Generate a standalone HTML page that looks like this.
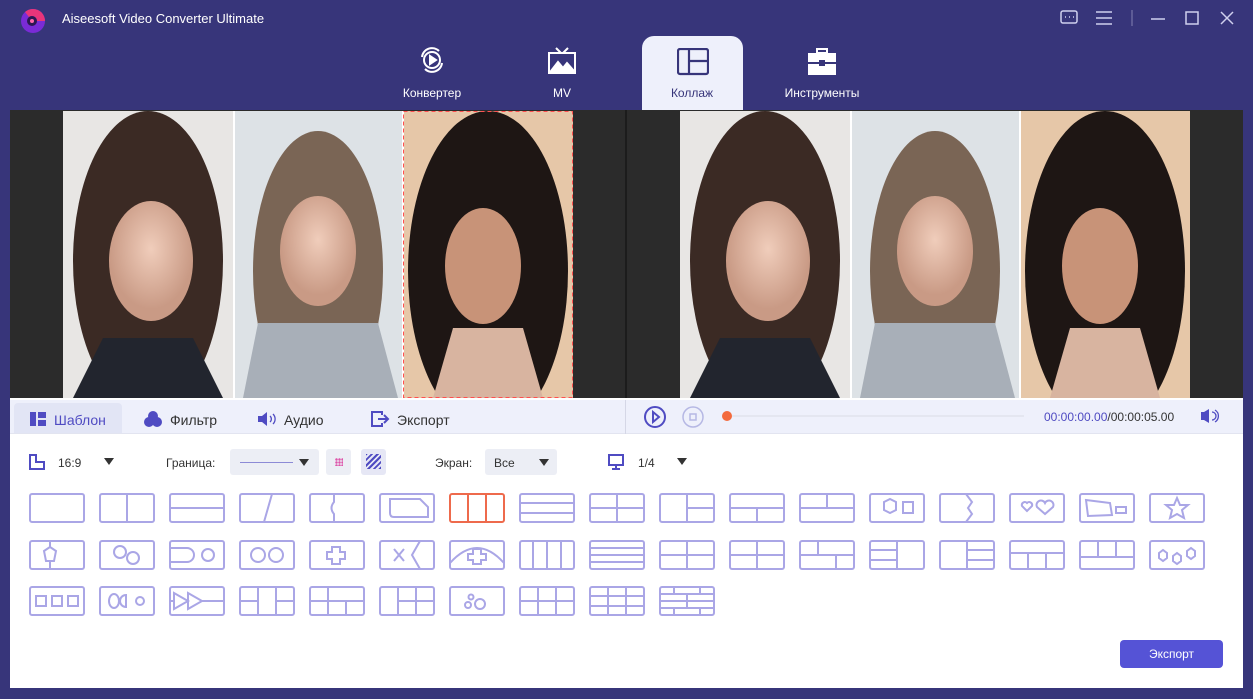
<!DOCTYPE html><html><head><meta charset="utf-8"><style>
*{margin:0;padding:0;box-sizing:border-box}
body{width:1253px;height:699px;background:#37357a;font-family:"Liberation Sans",sans-serif;position:relative;overflow:hidden}
.a{position:absolute}
.title{left:62px;top:11px;color:#fff;font-size:13px}
.tab{color:#fff;font-size:12px;text-align:center;top:86px}
.main{left:10px;top:110px;width:1233px;height:578px;background:#fff}
.prev{left:10px;top:110px;width:1233px;height:288px;background:#2b2b2b}
.bar{left:10px;top:400px;width:1233px;height:34px;background:#eef0fb;border-bottom:1px solid #e2e4f0}
.bt{font-size:14px;color:#333;top:412px}
.sm{font-size:12px;color:#333}
.tile{position:absolute;width:55px;height:30px}
</style></head><body>
<!-- logo -->
<svg class="a" style="left:17px;top:6px" width="32" height="30" viewBox="0 0 32 30"><circle cx="16" cy="15" r="12" fill="#7a2bd6"/><path d="M8 6 A12 12 0 0 1 28 15 L20 15 A5 5 0 0 0 12 11Z" fill="#e8357a"/><circle cx="15" cy="15" r="5" fill="#2b1850"/><circle cx="15" cy="15" r="2" fill="#f6a"/></svg>
<div class="a title">Aiseesoft Video Converter Ultimate</div>
<!-- window controls -->
<svg class="a" style="left:1058px;top:8px" width="180" height="20" fill="none" stroke="#cfd0ee" stroke-width="1.5"><rect x="3" y="3" width="16" height="12" rx="2"/><path d="M7 9h1M11 9h1M15 9h1"/><path d="M38 4h16M38 10h16M38 16h16"/><path d="M74 2v16" stroke="#6a68a0"/><path d="M93 11h14"/><rect x="128" y="4" width="12" height="12"/><path d="M163 4l12 12M175 4l-12 12"/></svg>
<!-- tabs -->
<div class="a" style="left:642px;top:36px;width:101px;height:76px;background:#eef0fb;border-radius:12px 12px 0 0"></div>
<svg class="a" style="left:417px;top:45px" width="30" height="30" fill="none" stroke="#fff" stroke-width="2"><circle cx="15" cy="15" r="8"/><path d="M13 11v8l6-4z" fill="#fff"/><path d="M5 12a10 10 0 0 1 17-6M25 18a10 10 0 0 1-17 6"/></svg>
<svg class="a" style="left:547px;top:46px" width="30" height="30" fill="none" stroke="#fff" stroke-width="2"><path d="M9 2l5 5M21 2l-5 5"/><rect x="2" y="7" width="26" height="20"/><path d="M4 25l7-9 5 6 4-5 7 8z" fill="#fff"/></svg>
<svg class="a" style="left:677px;top:48px" width="32" height="28" fill="none" stroke="#37357a" stroke-width="2.2"><rect x="1" y="1" width="30" height="25" rx="2"/><path d="M12 1v25M12 13h19"/></svg>
<svg class="a" style="left:807px;top:48px" width="30" height="28" fill="#fff"><rect x="10" y="1" width="10" height="4" fill="none" stroke="#fff" stroke-width="2"/><rect x="1" y="5" width="28" height="9"/><rect x="1" y="16" width="28" height="11"/><rect x="12" y="12" width="6" height="6" fill="#37357a"/></svg>
<div class="a tab" style="left:392px;width:80px">Конвертер</div>
<div class="a tab" style="left:542px;width:40px">MV</div>
<div class="a tab" style="left:652px;width:80px;color:#37357a">Коллаж</div>
<div class="a tab" style="left:772px;width:100px">Инструменты</div>
<div class="a main"></div>
<div class="a prev"></div>
<div class="a" style="left:625px;top:110px;width:2px;height:288px;background:#1c1c1c"></div>
<!-- photos -->
<svg class="a" style="left:63px;top:111px" width="510" height="287">
<defs><radialGradient id="f" cx=".5" cy=".4" r=".5"><stop offset="0" stop-color="#f0cdbb"/><stop offset="1" stop-color="#c99a85"/></radialGradient></defs>
<rect width="170" height="287" fill="#e8e6e4"/><rect x="171" width="168" height="287" fill="#dde2e6"/><rect x="340" width="170" height="287" fill="#e6c7a8"/>
<ellipse cx="85" cy="150" rx="75" ry="150" fill="#3b2a24"/><ellipse cx="88" cy="150" rx="42" ry="60" fill="url(#f)"/><path d="M10 287l30-60h90l30 60z" fill="#22252e"/>
<ellipse cx="255" cy="160" rx="65" ry="140" fill="#7a6555"/><ellipse cx="255" cy="140" rx="38" ry="55" fill="url(#f)"/><path d="M180 287l15-75h120l20 75z" fill="#a8afb8"/>
<ellipse cx="425" cy="160" rx="80" ry="160" fill="#1e1614"/><ellipse cx="420" cy="155" rx="38" ry="58" fill="#c89378"/><path d="M370 287l20-70h70l20 70z" fill="#d8b4a0"/>
<rect x="170" width="2" height="287" fill="#fff"/><rect x="339" width="2" height="287" fill="#fff"/>
<rect x="340.5" y=".5" width="169" height="286" fill="none" stroke="#ff5050" stroke-dasharray="4 3"/>
</svg>
<svg class="a" style="left:680px;top:111px" width="510" height="287">
<rect width="170" height="287" fill="#e8e6e4"/><rect x="171" width="168" height="287" fill="#dde2e6"/><rect x="340" width="170" height="287" fill="#e6c7a8"/>
<ellipse cx="85" cy="150" rx="75" ry="150" fill="#3b2a24"/><ellipse cx="88" cy="150" rx="42" ry="60" fill="url(#f)"/><path d="M10 287l30-60h90l30 60z" fill="#22252e"/>
<ellipse cx="255" cy="160" rx="65" ry="140" fill="#7a6555"/><ellipse cx="255" cy="140" rx="38" ry="55" fill="url(#f)"/><path d="M180 287l15-75h120l20 75z" fill="#a8afb8"/>
<ellipse cx="425" cy="160" rx="80" ry="160" fill="#1e1614"/><ellipse cx="420" cy="155" rx="38" ry="58" fill="#c89378"/><path d="M370 287l20-70h70l20 70z" fill="#d8b4a0"/>
<rect x="170" width="2" height="287" fill="#fff"/><rect x="339" width="2" height="287" fill="#fff"/>
</svg>
<!-- bar -->
<div class="a bar"></div>
<div class="a" style="left:14px;top:403px;width:108px;height:30px;background:#e2e5f5;border-radius:4px 4px 0 0"></div>
<div class="a" style="left:625px;top:400px;width:1px;height:34px;background:#d5d7e6"></div>
<svg class="a" style="left:30px;top:411px" width="16" height="16" fill="#4f4bc2"><rect x="0" y="1" width="6" height="14"/><rect x="8" y="1" width="8" height="6"/><rect x="8" y="9" width="8" height="6"/></svg>
<div class="a bt" style="left:54px;color:#4f4bc2">Шаблон</div>
<svg class="a" style="left:143px;top:410px" width="20" height="18" fill="#4f4bc2"><circle cx="10" cy="6" r="5"/><circle cx="6" cy="12" r="5"/><circle cx="14" cy="12" r="5"/></svg>
<div class="a bt" style="left:170px">Фильтр</div>
<svg class="a" style="left:257px;top:411px" width="22" height="16"><path d="M1 5h4l5-4v14l-5-4H1z" fill="#4f4bc2"/><path d="M13 5a4 4 0 0 1 0 6M16 3a7 7 0 0 1 0 10" stroke="#4f4bc2" fill="none" stroke-width="1.3"/></svg>
<div class="a bt" style="left:284px">Аудио</div>
<svg class="a" style="left:370px;top:410px" width="20" height="18" fill="none" stroke="#4f4bc2" stroke-width="2"><path d="M12 5V2H2v14h10v-3"/><path d="M8 9h10M14 5l4 4-4 4" /></svg>
<div class="a bt" style="left:397px">Экспорт</div>
<svg class="a" style="left:643px;top:405px" width="24" height="24" fill="none" stroke="#4f4bc2" stroke-width="2"><circle cx="12" cy="12" r="10"/><path d="M10 7v10l6-5z"/></svg>
<svg class="a" style="left:681px;top:405px" width="24" height="24" fill="none" stroke="#b6b8e4" stroke-width="1.5"><circle cx="12" cy="12" r="10"/><rect x="9" y="9" width="6" height="6"/></svg>
<div class="a" style="left:722px;top:411px;width:10px;height:10px;border-radius:5px;background:#f36a3d"></div>
<div class="a" style="left:732px;top:415px;width:292px;height:2px;background:#e4e6f0"></div>
<div class="a sm" style="left:1044px;top:410px"><span style="color:#4f4bc2">00:00:00.00</span>/00:00:05.00</div>
<svg class="a" style="left:1200px;top:408px" width="20" height="16"><path d="M1 4h3l5-3v14l-5-3H1z" fill="#4f4bc2"/><path d="M12 4a4 4 0 0 1 0 8M15 2a7 7 0 0 1 0 12" stroke="#4f4bc2" fill="none" stroke-width="1.3"/></svg>
<!-- controls -->
<svg class="a" style="left:29px;top:454px" width="16" height="16" fill="none" stroke="#4f4bc2" stroke-width="2"><path d="M1 1v14h14V8H7V1z"/></svg>
<div class="a sm" style="left:58px;top:456px">16:9</div>
<div class="a" style="left:104px;top:458px;border:5px solid transparent;border-top:7px solid #333"></div>
<div class="a sm" style="left:166px;top:456px">Граница:</div>
<div class="a" style="left:230px;top:449px;width:89px;height:26px;background:#eceef5;border-radius:3px"></div>
<div class="a" style="left:240px;top:462px;width:53px;height:1px;background:#8c8ad6"></div>
<div class="a" style="left:299px;top:459px;border:5px solid transparent;border-top:7px solid #333"></div>
<div class="a" style="left:326px;top:449px;width:25px;height:26px;background:#eceef5;border-radius:3px"></div>
<div class="a" style="left:335px;top:458px;width:8px;height:8px;background:radial-gradient(circle,#d5a 1px,transparent 1.5px) 0 0/3px 3px"></div>
<div class="a" style="left:361px;top:449px;width:25px;height:26px;background:#e6e7f5;border-radius:3px"></div>
<div class="a" style="left:366px;top:454px;width:15px;height:15px;background:repeating-linear-gradient(-45deg,#4f4bc2 0 2px,transparent 2px 4px)"></div>
<div class="a sm" style="left:435px;top:456px">Экран:</div>
<div class="a" style="left:485px;top:449px;width:72px;height:26px;background:#eceef5;border-radius:3px"></div>
<div class="a sm" style="left:494px;top:456px">Все</div>
<div class="a" style="left:539px;top:459px;border:5px solid transparent;border-top:7px solid #333"></div>
<svg class="a" style="left:608px;top:454px" width="16" height="16" fill="none" stroke="#4f4bc2" stroke-width="2"><rect x="1" y="1" width="14" height="10"/><path d="M8 11v4M4 15h8"/></svg>
<div class="a sm" style="left:638px;top:456px">1/4</div>
<div class="a" style="left:677px;top:458px;border:5px solid transparent;border-top:7px solid #333"></div>
<!-- tiles -->
<svg class="a" style="left:0;top:0" width="1253" height="699" fill="none" stroke="#aaa6e6" stroke-width="2">
<g transform="translate(30,494)"><rect width="54" height="28" rx="2"/></g>
<g transform="translate(100,494)"><rect width="54" height="28" rx="2"/><path d="M27 0v28"/></g>
<g transform="translate(170,494)"><rect width="54" height="28" rx="2"/><path d="M0 14h54"/></g>
<g transform="translate(240,494)"><rect width="54" height="28" rx="2"/><path d="M32 0l-8 28"/></g>
<g transform="translate(310,494)"><rect width="54" height="28" rx="2"/><path d="M24 0v8q-5 6 0 12v8"/></g>
<g transform="translate(380,494)"><rect width="54" height="28" rx="2"/><path d="M10 5h30l8 8v10H14q-4 0-4-4z"/></g>
<g transform="translate(450,494)" stroke="#ee6a4c"><rect width="54" height="28" rx="2"/><path d="M18 0v28M36 0v28"/></g>
<g transform="translate(520,494)"><rect width="54" height="28" rx="2"/><path d="M0 9h54M0 19h54"/></g>
<g transform="translate(590,494)"><rect width="54" height="28" rx="2"/><path d="M0 14h54M27 0v28"/></g>
<g transform="translate(660,494)"><rect width="54" height="28" rx="2"/><path d="M27 0v28M27 14h27"/></g>
<g transform="translate(730,494)"><rect width="54" height="28" rx="2"/><path d="M0 14h54M27 14v14"/></g>
<g transform="translate(800,494)"><rect width="54" height="28" rx="2"/><path d="M0 14h54M27 0v14"/></g>
<g transform="translate(870,494)"><rect width="54" height="28" rx="2"/><path d="M14 8l6-3 6 3v8l-6 3-6-3z"/><rect x="33" y="8" width="10" height="11"/></g>
<g transform="translate(940,494)"><rect width="54" height="28" rx="2"/><path d="M26 0l6 8-4 6 4 6-6 8"/></g>
<g transform="translate(1010,494)"><rect width="54" height="28" rx="2"/><path d="M17 17l-5-5a3 3 0 0 1 5-3 3 3 0 0 1 5 3z"/><path d="M35 20l-8-7a4 4 0 0 1 8-4 4 4 0 0 1 8 4z"/></g>
<g transform="translate(1080,494)"><rect width="54" height="28" rx="2"/><path d="M6 6l24 3 2 12-24 1z"/><path d="M36 13h10v6H36z"/></g>
<g transform="translate(1150,494)"><rect width="54" height="28" rx="2"/><path d="M27 4l3 7h8l-6 5 2 8-7-4-7 4 2-8-6-5h8z"/></g>
<g transform="translate(30,541)"><rect width="54" height="28" rx="2"/><path d="M20 0v6M20 20v8M14 10l6-4 6 4-2 10h-8z"/></g>
<g transform="translate(100,541)"><rect width="54" height="28" rx="2"/><circle cx="20" cy="11" r="6"/><circle cx="33" cy="17" r="6"/></g>
<g transform="translate(170,541)"><rect width="54" height="28" rx="2"/><path d="M0 7h17a7 7 0 0 1 0 14H0"/><circle cx="38" cy="14" r="6"/></g>
<g transform="translate(240,541)"><rect width="54" height="28" rx="2"/><circle cx="18" cy="14" r="7"/><circle cx="36" cy="14" r="7"/></g>
<g transform="translate(310,541)"><rect width="54" height="28" rx="2"/><path d="M22 6h8v5h5v7h-5v5h-8v-5h-5v-7h5z"/></g>
<g transform="translate(380,541)"><rect width="54" height="28" rx="2"/><path d="M14 8l10 12M24 8l-10 12M40 0l-8 14 8 14"/></g>
<g transform="translate(450,541)"><rect width="54" height="28" rx="2"/><path d="M0 22q27-30 54 0"/><path d="M23 8h8v5h5v6h-5v4h-8v-4h-5v-6h5z"/></g>
<g transform="translate(520,541)"><rect width="54" height="28" rx="2"/><path d="M13 0v28M27 0v28M41 0v28"/></g>
<g transform="translate(590,541)"><rect width="54" height="28" rx="2"/><path d="M0 7h54M0 14h54M0 21h54"/></g>
<g transform="translate(660,541)"><rect width="54" height="28" rx="2"/><path d="M0 14h54M27 0v28"/></g>
<g transform="translate(730,541)"><rect width="54" height="28" rx="2"/><path d="M0 14h54M27 0v28"/></g>
<g transform="translate(800,541)"><rect width="54" height="28" rx="2"/><path d="M0 14h54M18 0v14M36 14v14"/></g>
<g transform="translate(870,541)"><rect width="54" height="28" rx="2"/><path d="M0 9h27M0 19h27M27 0v28"/></g>
<g transform="translate(940,541)"><rect width="54" height="28" rx="2"/><path d="M27 0v28M27 9h27M27 19h27"/></g>
<g transform="translate(1010,541)"><rect width="54" height="28" rx="2"/><path d="M0 12h54M18 12v16M36 12v16"/></g>
<g transform="translate(1080,541)"><rect width="54" height="28" rx="2"/><path d="M0 16h54M18 0v16M36 0v16"/></g>
<g transform="translate(1150,541)"><rect width="54" height="28" rx="2"/><path d="M9 12l4-3 4 3v5l-4 3-4-3zM23 15l4-3 4 3v5l-4 3-4-3zM37 10l4-3 4 3v5l-4 3-4-3z"/></g>
<g transform="translate(30,587)"><rect width="54" height="28" rx="2"/><rect x="6" y="9" width="10" height="10"/><rect x="22" y="9" width="10" height="10"/><rect x="38" y="9" width="10" height="10"/></g>
<g transform="translate(100,587)"><rect width="54" height="28" rx="2"/><ellipse cx="14" cy="14" rx="5" ry="7"/><path d="M26 8a6 6 0 0 0 0 12z"/><circle cx="40" cy="14" r="4"/></g>
<g transform="translate(170,587)"><rect width="54" height="28" rx="2"/><path d="M0 14h4M4 6l14 8-14 8zM18 6l14 8-14 8zM32 14h22"/></g>
<g transform="translate(240,587)"><rect width="54" height="28" rx="2"/><path d="M18 0v28M36 0v28M0 14h18M36 14h18"/></g>
<g transform="translate(310,587)"><rect width="54" height="28" rx="2"/><path d="M0 14h54M18 0v28M36 14v14"/></g>
<g transform="translate(380,587)"><rect width="54" height="28" rx="2"/><path d="M18 0v28M18 14h36M36 0v28"/></g>
<g transform="translate(450,587)"><rect width="54" height="28" rx="2"/><circle cx="18" cy="18" r="3"/><circle cx="21" cy="10" r="2.5"/><circle cx="30" cy="17" r="5"/></g>
<g transform="translate(520,587)"><rect width="54" height="28" rx="2"/><path d="M0 14h54M18 0v28M36 0v28"/></g>
<g transform="translate(590,587)"><rect width="54" height="28" rx="2"/><path d="M0 9h54M0 19h54M18 0v28M36 0v28"/></g>
<g transform="translate(660,587)"><rect width="54" height="28" rx="2"/><path d="M0 7h54M0 14h54M0 21h54M14 0v7M40 0v7M14 21v7M40 21v7M27 7v14"/></g>
</svg>
<div class="a" style="left:1120px;top:640px;width:103px;height:28px;background:#5553d6;border-radius:4px;color:#fff;font-size:12px;text-align:center;line-height:28px">Экспорт</div>
</body></html>
